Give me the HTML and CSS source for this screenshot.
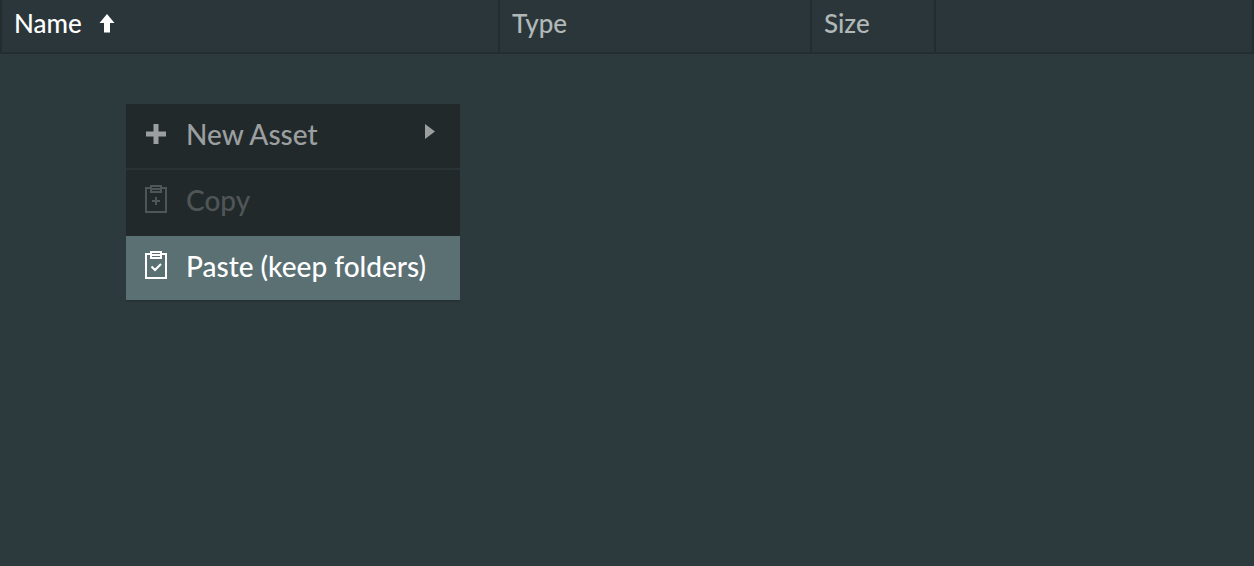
FILE: index.html
```html
<!DOCTYPE html>
<html lang="en">
<head>
<meta charset="utf-8">
<title>Assets</title>
<link rel="stylesheet" href="styles.css">
</head>
<body>
<main class="assets">
  <table class="asset-table">
    <colgroup>
      <col class="col-name">
      <col class="col-type">
      <col class="col-size">
      <col>
    </colgroup>
    <thead>
      <tr>
        <th class="sorted" scope="col" aria-sort="ascending">
          <span class="heading">Name
            <svg class="sort-arrow" width="16" height="20" viewBox="0 0 16 20" aria-hidden="true"><path d="M8 1 15.500 10H11V19.500H5V10H.5Z"/></svg>
          </span>
        </th>
        <th scope="col">Type</th>
        <th scope="col">Size</th>
        <td></td>
      </tr>
    </thead>
  </table>

  <div class="menu" role="menu">
    <button class="item" type="button" role="menuitem" aria-haspopup="true">
      <svg class="icon" width="24" height="30" viewBox="0 0 24 30" aria-hidden="true"><path class="solid" d="M9.500 5h5v7.500H22v5h-7.500V25h-5v-7.500H2v-5h7.500Z"/></svg>
      <span class="label">New Asset</span>
      <svg class="submenu-arrow" width="12" height="16" viewBox="0 0 12 16" aria-hidden="true"><path class="solid" d="M1 0 11 7.500 1 15Z"/></svg>
    </button>
    <button class="item" type="button" role="menuitem" disabled>
      <svg class="icon" width="24" height="30" viewBox="0 0 24 30" aria-hidden="true"><path class="line" d="M6 3H2V27H22V3H18M7 1H17V7H7ZM7 4H17M12 12V20M8 16H16"/></svg>
      <span class="label">Copy</span>
    </button>
    <button class="item active" type="button" role="menuitem">
      <svg class="icon" width="24" height="30" viewBox="0 0 24 30" aria-hidden="true"><path class="line" d="M6 3H2V27H22V3H18M7 1H17V7H7ZM7 4H17M7.500 15.500 11 19 17 13"/></svg>
      <span class="label">Paste (keep folders)</span>
    </button>
  </div>
</main>
</body>
</html>
```
FILE: styles.css
```css
* {
  box-sizing: border-box;
}

body {
  margin: 0;
  background: #2c393d;
  font-family: Lato, "Open Sans", sans-serif;
  font-weight: 500;
}

.assets {
  position: relative;
  min-height: 100vh;
}

.asset-table {
  width: 100%;
  table-layout: fixed;
  border-collapse: separate;
  border-spacing: 0;
  border-left: 2px solid #232c2e;
  background: #2b363a;
}

.col-name {
  width: 498px;
}

.col-type {
  width: 312px;
}

.col-size {
  width: 124px;
}

.asset-table th,
.asset-table td {
  height: 54px;
  padding: 0 12px 6px;
  border-right: 2px solid #232c2e;
  border-bottom: 2px solid #232c2e;
  color: #b1b8b8;
  font-size: 26px;
  font-weight: 500;
  line-height: 32px;
  text-align: left;
}

.asset-table .sorted {
  color: #fff;
}

.heading {
  display: flex;
  align-items: center;
  gap: 17px;
}

.sort-arrow {
  fill: currentColor;
}

.menu {
  position: absolute;
  top: 104px;
  left: 126px;
  width: 334px;
  background: #22292b;
  box-shadow: 0 2px 0 #273235;
}

.item {
  display: flex;
  align-items: center;
  width: 100%;
  height: 66px;
  padding: 0 24px 4px 18px;
  border: 0;
  border-bottom: 2px solid #293235;
  background: transparent;
  color: #9b9fa0;
  font: inherit;
  font-size: 28px;
  line-height: 36px;
  text-align: left;
}

.item:disabled {
  border-color: transparent;
  color: #505657;
}

.item.active {
  height: 64px;
  border: 0;
  background: #5b7073;
  color: #fff;
}

.icon {
  flex: none;
  margin-right: 18px;
}

.label {
  flex: 1;
  white-space: nowrap;
}

.submenu-arrow {
  flex: none;
  margin-bottom: 4px;
}

.solid {
  fill: currentColor;
}

.line {
  fill: none;
  stroke: currentColor;
  stroke-width: 2;
}
```
